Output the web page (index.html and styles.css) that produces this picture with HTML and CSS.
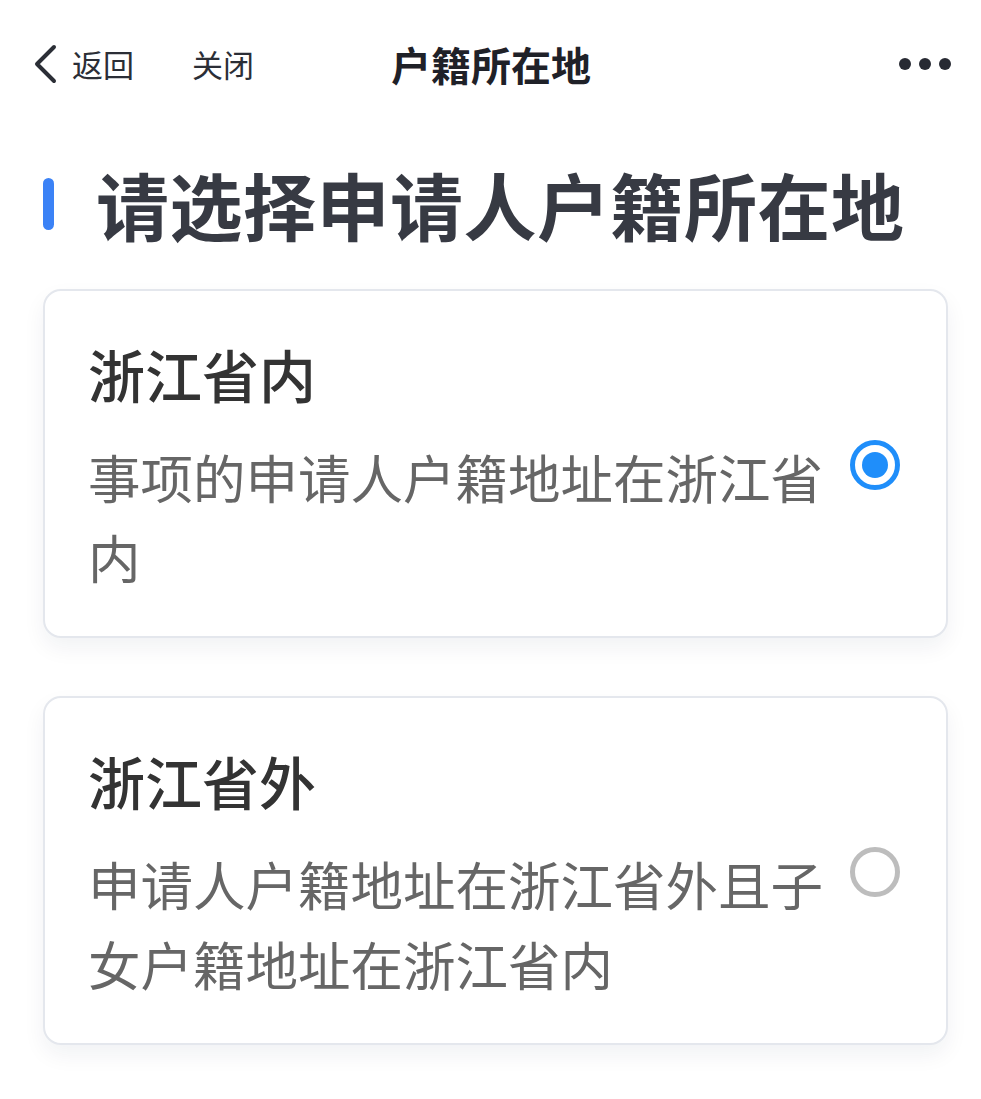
FILE: index.html
```html
<!DOCTYPE html>
<html lang="zh-CN">
<head>
<meta charset="utf-8">
<title>户籍所在地</title>
<link rel="stylesheet" href="styles.css">
</head>
<body>
<header class="navbar">
  <div class="nav-left">
    <span class="back">
      <svg class="chevron" viewBox="0 0 26 40" width="26" height="40"><path d="M22 3 L5 20 L22 37" fill="none" stroke="#2b2e36" stroke-width="4" stroke-linecap="round" stroke-linejoin="round"/></svg>
      <span class="nav-link">返回</span>
    </span>
    <span class="nav-link close">关闭</span>
  </div>
  <div class="nav-title">户籍所在地</div>
  <div class="nav-more"><i></i><i></i><i></i></div>
</header>

<main class="content">
  <h1 class="section-title"><span class="bar"></span>请选择申请人户籍所在地</h1>

  <div class="card">
    <div class="card-text">
      <div class="card-title">浙江省内</div>
      <div class="card-desc">事项的申请人户籍地址在浙江省内</div>
    </div>
    <span class="radio checked"></span>
  </div>

  <div class="card">
    <div class="card-text">
      <div class="card-title">浙江省外</div>
      <div class="card-desc">申请人户籍地址在浙江省外且子女户籍地址在浙江省内</div>
    </div>
    <span class="radio"></span>
  </div>
</main>
</body>
</html>
```

FILE: styles.css
```css
* { box-sizing: border-box; }
html, body { margin: 0; padding: 0; background: #fff; }
body {
  font-family: "Noto Sans CJK SC", "Noto Sans", sans-serif;
  color: #333;
  width: 981px;
}
.navbar {
  height: 128px;
  display: flex;
  align-items: center;
  position: relative;
  padding: 0 30px 0 32px;
}
.nav-left {
  display: flex;
  align-items: center;
  gap: 58px;
}
.back { display: flex; align-items: center; gap: 14px; }
.chevron { display: block; }
.nav-link {
  font-size: 31px;
  color: #2b2e36;
  line-height: 40px;
}
.nav-title {
  position: absolute;
  left: 391px;
  top: 0;
  height: 128px;
  line-height: 128px;
  font-size: 40px;
  font-weight: 700;
  color: #1f2128;
}
.nav-more {
  margin-left: auto;
  display: flex;
  gap: 8px;
}
.nav-more i {
  width: 12px; height: 12px;
  border-radius: 50%;
  background: #272a33;
  display: block;
}
.content { padding: 0 33px 0 43px; }
.section-title {
  margin: 30px 0 41px;
  display: flex;
  align-items: center;
  font-size: 73px;
  line-height: 90px;
  font-weight: 700;
  color: #373a43;
  letter-spacing: 0.5px;
}
.bar {
  width: 11px;
  height: 52px;
  border-radius: 6px;
  background: #3b82f6;
  margin-right: 42px;
  margin-top: 2px;
}
.card {
  display: flex;
  align-items: center;
  gap: 16px;
  background: #fff;
  border: 2px solid #e4e7ed;
  border-radius: 18px;
  box-shadow: 0 10px 22px rgba(20, 30, 60, 0.06);
  padding: 42px 46px 40px 43px;
  margin-bottom: 58px;
}
.card-text { flex: 1; min-width: 0; }
.card-title {
  font-size: 57px;
  line-height: 80px;
  font-weight: 500;
  color: #333;
  margin-bottom: 23px;
}
.card-desc {
  font-size: 52.5px;
  line-height: 80px;
  color: #666;
}
.radio {
  flex: none;
  width: 50px;
  height: 50px;
  border-radius: 50%;
  border: 5px solid #bdbdbd;
  position: relative;
}
.radio.checked { border-color: #1f8efa; }
.radio.checked::after {
  content: "";
  position: absolute;
  left: 50%; top: 50%;
  width: 26px; height: 26px;
  margin: -13px 0 0 -13px;
  border-radius: 50%;
  background: #1f8efa;
}
```
